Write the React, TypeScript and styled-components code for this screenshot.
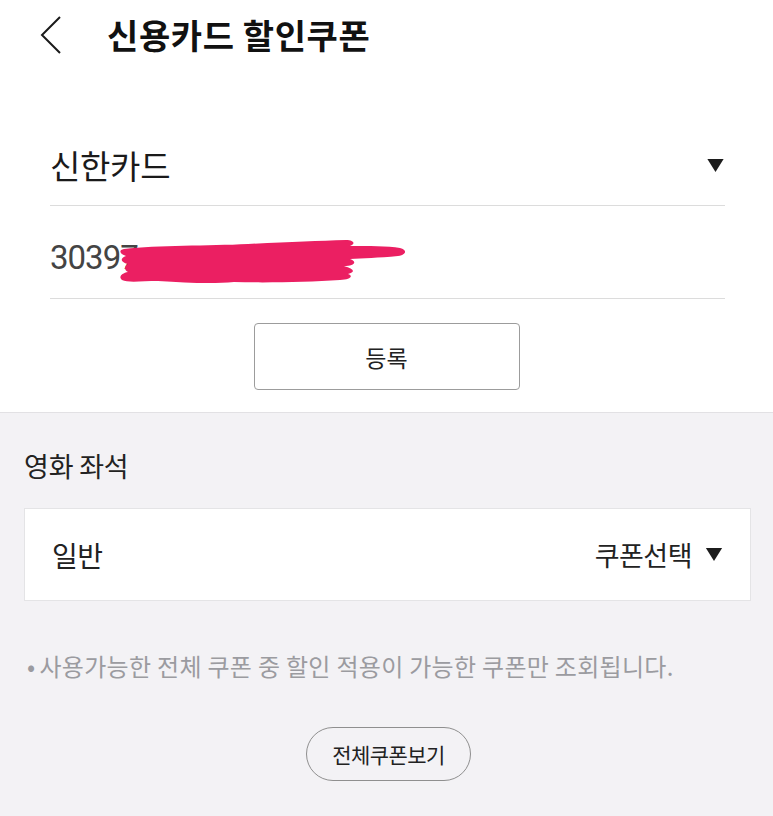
import styled, { createGlobalStyle } from 'styled-components';

const GlobalStyle = createGlobalStyle`
  html, body {
    margin: 0;
    padding: 0;
    background: #f3f2f5;
  }
  body {
    font-family: 'Noto Sans CJK KR', 'Noto Sans', sans-serif;
    color: #1a1a1a;
  }
`;

const KR = `'Noto Sans CJK KR', 'Noto Sans', sans-serif`;

function Caret({ width, height }: { width: number; height: number }) {
  return (
    <svg width={width} height={height} viewBox="0 0 10 8" aria-hidden>
      <path d="M0 0 H10 L5 8 Z" fill="#1c1c1c" />
    </svg>
  );
}

// hand-drawn redaction over the card number
function Scribble() {
  return (
    <ScribbleMark width="290" height="50" viewBox="0 0 290 50" aria-hidden>
      <path
        d="M6 12 C40 8 90 9 130 7 C170 5 200 4 228 3 C236 3 238 7 232 9
           C250 9 270 9 282 11 C290 13 288 18 280 19 C260 21 245 21 232 22
           C240 25 236 29 226 29 C236 32 238 35 230 37 C236 39 232 43 222 43
           C190 45 150 46 116 45 C96 47 70 46 40 44 C24 44 10 46 4 43
           C0 40 4 36 10 35 C6 33 6 29 10 27 C2 25 2 21 8 19
           C2 17 0 13 6 12 Z"
        fill="#eb1f62"
      />
    </ScribbleMark>
  );
}

export default function App() {
  return (
    <>
      <GlobalStyle />
      <Page>
        <Header>
          <BackButton aria-label="뒤로">
            <svg width="24" height="40" viewBox="0 0 24 40">
              <path d="M21 2 L3 20 L21 38" fill="none" stroke="#1a1a1a" strokeWidth="2" />
            </svg>
          </BackButton>
          <Title>신용카드 할인쿠폰</Title>
        </Header>

        <FormSection>
          <SelectRow>
            <SelectText>신한카드</SelectText>
            <Caret width={17} height={13} />
          </SelectRow>
          <InputRow>
            <CardNumber>30397</CardNumber>
            <Scribble />
          </InputRow>
          <ButtonArea>
            <RegisterButton>등록</RegisterButton>
          </ButtonArea>
        </FormSection>

        <CouponSection>
          <SectionLabel>영화 좌석</SectionLabel>
          <SeatCard>
            <SeatName>일반</SeatName>
            <CouponPicker>
              쿠폰선택
              <Caret width={18} height={13} />
            </CouponPicker>
          </SeatCard>
          <Notice>
            <Bullet>•</Bullet>사용가능한 전체 쿠폰 중 할인 적용이 가능한 쿠폰만 조회됩니다.
          </Notice>
          <PillArea>
            <PillButton>전체쿠폰보기</PillButton>
          </PillArea>
        </CouponSection>
      </Page>
    </>
  );
}

const Page = styled.div`
  display: flex;
  flex-direction: column;
  min-height: 100vh;
  width: 100%;
`;

const Header = styled.div`
  display: flex;
  align-items: center;
  height: 72px;
  padding-left: 39px;
  background: #fff;
`;

const BackButton = styled.button`
  display: flex;
  align-items: center;
  border: none;
  background: none;
  padding: 0;
  margin-right: 44px;
  margin-top: -2px;
  cursor: pointer;
`;

const Title = styled.h1`
  margin: 0;
  margin-top: -4px;
  font-family: ${KR};
  font-size: 34px;
  font-weight: 700;
  color: #111;
  letter-spacing: 0.6px;
`;

const FormSection = styled.div`
  display: flex;
  flex-direction: column;
  padding: 53px 48px 22px 50px;
  background: #fff;
`;

const SelectRow = styled.div`
  display: flex;
  align-items: center;
  justify-content: space-between;
  height: 80px;
  padding-right: 1px;
  border-bottom: 1px solid #dcdcdc;
`;

const SelectText = styled.span`
  font-family: ${KR};
  font-size: 33px;
  color: #1a1a1a;
  letter-spacing: -0.3px;
`;

const InputRow = styled.div`
  position: relative;
  display: flex;
  align-items: center;
  height: 92px;
  border-bottom: 1px solid #dcdcdc;
  overflow: hidden;
`;

const CardNumber = styled.span`
  font-family: Roboto, ${KR};
  font-size: 33px;
  color: #444;
  letter-spacing: -1px;
  margin-top: 10px;
`;

const ScribbleMark = styled.svg`
  position: absolute;
  left: 68px;
  top: 31px;
`;

const ButtonArea = styled.div`
  display: flex;
  justify-content: center;
  padding-top: 24px;
  margin-right: -46px;
  margin-left: -48px;
`;

const RegisterButton = styled.button`
  width: 266px;
  height: 67px;
  border: 1px solid #9c9c9c;
  border-radius: 4px;
  background: #fff;
  font-family: ${KR};
  font-size: 23px;
  color: #222;
  cursor: pointer;
`;

const CouponSection = styled.div`
  flex: 1;
  display: flex;
  flex-direction: column;
  padding: 34px 22px 40px 24px;
  background: #f3f2f5;
  border-top: 1px solid #e2e1e4;
`;

const SectionLabel = styled.div`
  font-family: ${KR};
  font-size: 27px;
  line-height: 38px;
  color: #222;
  letter-spacing: -0.2px;
`;

const SeatCard = styled.div`
  display: flex;
  align-items: center;
  justify-content: space-between;
  height: 91px;
  margin-top: 23px;
  padding: 0 27px 0 27px;
  background: #fff;
  border: 1px solid #e4e4e6;
`;

const SeatName = styled.span`
  font-family: ${KR};
  font-size: 28px;
  color: #222;
  letter-spacing: -0.5px;
`;

const CouponPicker = styled.span`
  display: flex;
  align-items: center;
  gap: 13px;
  font-family: ${KR};
  font-size: 27px;
  color: #222;
  letter-spacing: -0.5px;
`;

const Notice = styled.p`
  margin: 50px 0 0 3px;
  font-family: ${KR};
  font-size: 24px;
  line-height: 30px;
  color: #9b9ba0;
  letter-spacing: 0.3px;
  white-space: nowrap;
`;

const Bullet = styled.span`
  margin-right: 4px;
`;

const PillArea = styled.div`
  display: flex;
  justify-content: center;
  margin-top: 46px;
  margin-right: -2px;
`;

const PillButton = styled.button`
  width: 165px;
  height: 54px;
  border: 1.5px solid #8f8f8f;
  border-radius: 27px;
  background: transparent;
  font-family: ${KR};
  font-size: 21px;
  color: #222;
  letter-spacing: -0.6px;
  cursor: pointer;
`;
